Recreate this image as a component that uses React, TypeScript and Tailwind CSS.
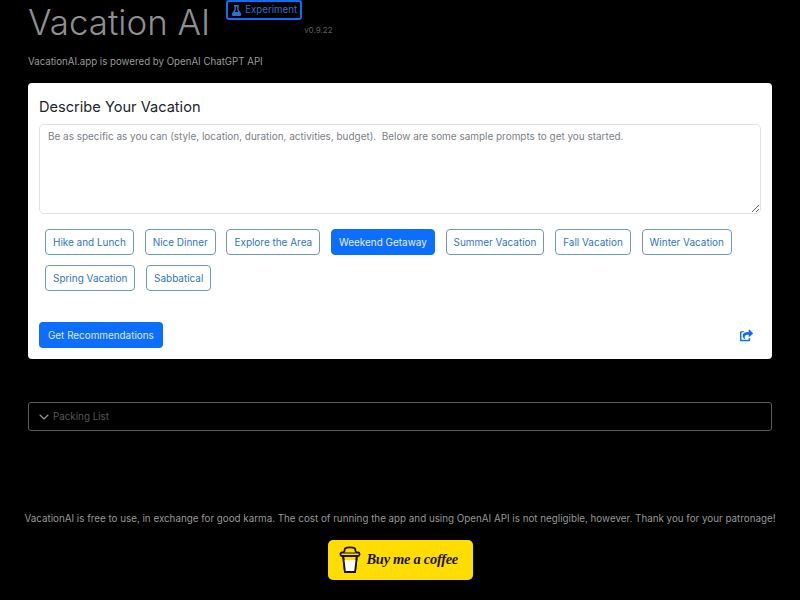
import React from 'react';
import { ChevronDown } from 'lucide-react';
import { FaFlask, FaShareSquare } from 'react-icons/fa';

const PROMPTS = [
  { label: 'Hike and Lunch', active: false },
  { label: 'Nice Dinner', active: false },
  { label: 'Explore the Area', active: false },
  { label: 'Weekend Getaway', active: true },
  { label: 'Summer Vacation', active: false },
  { label: 'Fall Vacation', active: false },
  { label: 'Winter Vacation', active: false },
  { label: 'Spring Vacation', active: false },
  { label: 'Sabbatical', active: false },
];

const CoffeeCup = () => (
  <svg width="22" height="28" viewBox="0 0 22 28" fill="none" stroke="#1a1206" strokeWidth="1.8">
    <path d="M4 9 L6 26 H16 L18 9 Z" fill="#ffdd00" />
    <path d="M4.9 14 L5.9 25 H16.1 L17.1 14 Z" fill="#ffffff" stroke="none" />
    <path d="M4 9 L6 26 H16 L18 9" />
    <rect x="1.5" y="6.5" width="19" height="3.5" rx="1.5" fill="#ffdd00" />
    <path d="M5 6.5 L6 2.5 C8 1 14 1 16 2.5 L17 6.5" fill="#ffdd00" />
  </svg>
);

export default function App() {
  return (
    <div className="w-[800px] h-[600px] overflow-hidden bg-black font-['Inter',sans-serif] text-[9.95px]">
      <div className="px-[28px]">
        {/* Header */}
        <div className="flex items-start h-[46px]">
          <h1 className="text-[34.9px] leading-[44px] font-light text-[#8f8f8f]">Vacation AI</h1>
          <div className="ml-[16px] flex flex-col items-start">
            <span className="h-[20px] w-[76px] flex items-center justify-center gap-[3px] rounded-[3px] border-2 border-[#0d6efd] text-[9.7px] text-[#2f6fd0]">
              <FaFlask size={11} />
              Experiment
            </span>
            <span className="ml-[78px] mt-[5px] text-[8px] leading-[11px] text-[#5f5f5f]">v0.9.22</span>
          </div>
        </div>
        <p className="mt-[9px] h-[28px] text-[9.7px] leading-[14px] text-[#9a9a9a]">VacationAI.app is powered by OpenAI ChatGPT API</p>

        {/* Prompt card */}
        <div className="h-[276px] rounded-[4px] bg-white px-[11px] pt-[14px]">
          <h2 className="h-[20px] text-[14.6px] leading-[20px] text-[#212529]">Describe Your Vacation</h2>
          <textarea
            className="mt-[7px] block h-[90px] w-full rounded-[5px] border border-[#dee2e6] px-[8px] py-[4px] leading-[15px] text-[#212529] placeholder:text-[#7b8086] outline-none"
            placeholder="Be as specific as you can (style, location, duration, activities, budget).  Below are some sample prompts to get you started."
          />
          <div className="mt-[15px] flex h-[62px] flex-wrap content-start gap-x-[10.8px] gap-y-[10px] px-[6px]">
            {PROMPTS.map((p) =>
              p.active ? (
                <button key={p.label} className="h-[26px] rounded-[4px] border border-[#0d6efd] bg-[#0d6efd] px-[7px] text-[#e8f0ff]">
                  {p.label}
                </button>
              ) : (
                <button key={p.label} className="h-[26px] rounded-[4px] border border-[#6c9ac4] bg-white px-[7px] text-[#2f76c4]">
                  {p.label}
                </button>
              ),
            )}
          </div>
          <div className="mt-[31px] flex items-center justify-between">
            <button className="h-[26px] rounded-[4px] bg-[#0d6efd] px-[9px] text-[9.9px] text-[#dfeaff]">Get Recommendations</button>
            <FaShareSquare size={13} className="mr-[8px] text-[#0d6efd]" />
          </div>
        </div>

        {/* Packing list */}
        <div className="mt-[43px] flex h-[29px] items-center gap-[1px] rounded-[3px] border border-[#5a5a5a] px-[7px] pt-px text-[9.8px] text-[#55555c]">
          <ChevronDown size={16} strokeWidth={1.6} className="text-[#9a9a9a]" />
          Packing List
        </div>
      </div>

      {/* Footer */}
      <p className="mt-[81px] text-center text-[9.8px] leading-[14px] whitespace-nowrap text-[#979797]">
        VacationAI is free to use, in exchange for good karma. The cost of running the app and using OpenAI API is not negligible, however. Thank you for your patronage!
      </p>
      <div className="mt-[14px] flex justify-center">
        <div className="flex h-[40px] w-[145px] items-center gap-[6px] rounded-[5px] bg-[#ffdd00] pl-[11px]">
          <CoffeeCup />
          <span className="font-['Liberation_Serif',serif] text-[14.5px] font-bold italic tracking-[-0.3px] text-[#1a1206]">Buy me a coffee</span>
        </div>
      </div>
    </div>
  );
}
